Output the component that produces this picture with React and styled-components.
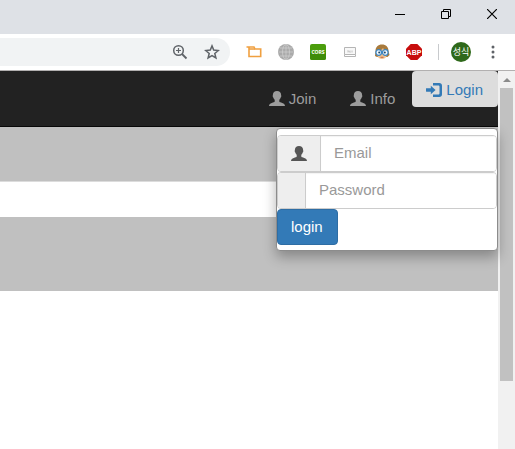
import React from "react";
import styled, { createGlobalStyle } from "styled-components";

const GlobalStyle = createGlobalStyle`
  * { box-sizing: border-box; }
  html, body, #root { height: 100%; }
  body {
    margin: 0;
    background: #fff;
    font: 15px/22px "Liberation Sans", Arial, sans-serif;
    color: #333;
  }
  button, input { font: inherit; }
  svg { display: block; flex: none; }
`;

const Window = styled.div`
  display: flex;
  flex-direction: column;
  min-height: 100%;
`;

const TitleBar = styled.header`
  display: flex;
  justify-content: flex-end;
  height: 34px;
  background: #dee1e6;
`;

const CaptionButton = styled.button`
  display: flex;
  justify-content: center;
  width: 46px;
  padding: 9px 0 0;
  border: 0;
  background: none;
`;

const Toolbar = styled.div`
  display: flex;
  align-items: center;
  gap: 16px;
  height: 37px;
  padding-right: 14px;
  background: #fff;
  border-bottom: 1px solid #b2b0b0;
`;

const AddressBar = styled.div`
  flex: 1;
  display: flex;
  align-items: center;
  justify-content: flex-end;
  gap: 16px;
  height: 28px;
  padding-right: 10px;
  border-radius: 0 14px 14px 0;
  background: #f1f3f4;
`;

const IconButton = styled.button`
  display: flex;
  align-items: center;
  justify-content: center;
  width: 16px;
  height: 16px;
  padding: 0;
  border: 0;
  border-radius: ${(p) => p.$radius || "0"};
  background: ${(p) => p.$fill || "none"};
  color: #fff;
`;

const Profile = styled.div`
  display: flex;
  align-items: center;
  gap: 12px;
`;

const Divider = styled.span`
  width: 1px;
  height: 16px;
  background: #c8cacd;
`;

const Avatar = styled.button`
  width: 20px;
  height: 20px;
  padding: 0;
  margin-right: 2px;
  border: 0;
  border-radius: 50%;
  background: #2f691b;
  color: #fff;
  font: 9px/20px "Noto Sans CJK KR", sans-serif;
`;

const MenuButton = styled(IconButton)`
  width: 12px;
`;

const Viewport = styled.div`
  flex: 1;
  display: flex;
`;

const Page = styled.main`
  flex: 1;
  min-width: 0;
`;

const NavBar = styled.nav`
  display: flex;
  align-items: stretch;
  justify-content: flex-end;
  height: 56px;
  background: #222;
  border-bottom: 1px solid #080808;
`;

const NavLink = styled.a`
  display: flex;
  align-items: center;
  gap: 4px;
  padding: 0 17px;
  color: #9d9d9d;
  text-decoration: none;
`;

const LoginItem = styled.div`
  position: relative;
  display: flex;
  align-items: flex-start;
`;

const LoginToggle = styled.button`
  display: flex;
  align-items: center;
  gap: 4px;
  height: 36px;
  padding: 2px 15px 0 14px;
  border: 0;
  border-radius: 4px;
  background: #ddd;
  color: #337ab7;
`;

const LoginMenu = styled.form`
  position: absolute;
  z-index: 1;
  top: 100%;
  right: 0;
  width: 222px;
  margin-top: 2px;
  padding: 6px 0 5px;
  background: #fff;
  border: 1px solid #8c8c8c;
  border-radius: 4px;
  box-shadow: 0 6px 13px rgba(0, 0, 0, 0.3);
`;

const InputGroup = styled.label`
  display: flex;
  height: 37px;
  border: 1px solid #ccc;
  border-radius: 4px;
  overflow: hidden;
`;

const Addon = styled.span`
  display: flex;
  align-items: center;
  padding: 0 13px;
  min-width: 28px;
  background: #eee;
  border-right: 1px solid #ccc;
  color: #555;
`;

const Field = styled.input`
  flex: 1;
  min-width: 0;
  padding: 0 13px 2px;
  border: 0;
  outline: 0;
  background: #fff;
  box-shadow: inset 0 1px 1px rgba(0, 0, 0, 0.05);
  color: #555;
  &::placeholder { color: #999; opacity: 1; }
`;

const SubmitButton = styled.button`
  display: block;
  height: 36px;
  padding: 0 14px 0 13px;
  border: 1px solid #2e6da4;
  border-radius: 4px;
  background: #337ab7;
  color: #fff;
`;

const Band = styled.section`
  height: ${(p) => p.$height};
  background: #c0c0c0;
`;

const Strip = styled.section`
  height: 36px;
  background: #fff;
  border-top: 1px solid #dcdcdc;
`;

const ScrollTrack = styled.div`
  display: flex;
  flex-direction: column;
  align-items: center;
  width: 17px;
  background: #f1f1f1;
  &::after { content: ""; flex: 3; }
`;

const ScrollArrow = styled.button`
  display: flex;
  align-items: center;
  justify-content: center;
  width: 17px;
  height: 17px;
  padding: 0;
  border: 0;
  background: none;
`;

const ScrollThumb = styled.div`
  flex: 13;
  width: 13px;
  background: #c1c1c1;
`;

function UserIcon() {
  return (
    <svg width="16" height="15" viewBox="0 0 16 15" fill="currentColor" aria-hidden="true">
      <path d="M8 0C5.500 0 3.900 1.500 3.900 3.700c0 .7-.3.9-.2 1.500.1.8.6 1 .8 1.700.2.800.700 1.200 1.200 1.800v1.500c0 .6-.5.800-1.200 1.100l-2.900 1.100C.6 12.900.1 13.600 0 15h16c-.1-1.400-.6-2.100-1.600-2.600l-2.900-1.100c-.7-.3-1.200-.5-1.200-1.100V8.700c.5-.6 1-1 1.200-1.800.2-.7.700-.9.800-1.700.1-.6-.2-.8-.2-1.500C12.100 1.500 10.500 0 8 0z" />
    </svg>
  );
}

function LoginIcon() {
  return (
    <svg width="16" height="15" viewBox="0 0 16 15" fill="currentColor" aria-hidden="true">
      <path d="M7 0h6.200C15 0 16 1 16 2.700v8.600c0 1.700-1 2.700-2.800 2.700H7v-2.500h5.200c.9 0 1.300-.3 1.300-1.200V3.700c0-.9-.4-1.200-1.300-1.200H7z" />
      <path d="M4.800 2.700 9.600 7l-4.800 4.300V8.700H.4c-.3 0-.4-.1-.4-.4V5.700c0-.3.1-.4.4-.4h4.400z" />
    </svg>
  );
}

function BrowserToolbar() {
  return (
    <Toolbar>
      <AddressBar>
        <IconButton aria-label="Zoom">
          <svg width="16" height="16" viewBox="0 0 16 16" fill="none" stroke="#5f6368">
            <circle cx="6.500" cy="6.500" r="4.800" strokeWidth="1.500" />
            <path d="m10 10 4.500 4.500" strokeWidth="1.800" />
            <path d="M4 6.500h5M6.500 4v5" strokeWidth="1.200" />
          </svg>
        </IconButton>
        <IconButton aria-label="Bookmark">
          <svg width="16" height="16" viewBox="0 0 16 16" fill="none" stroke="#5f6368" strokeWidth="1.500">
            <path d="m8 1.900 1.700 4.200 4.600.4-3.500 3 1.100 4.500L8 11.600 4.100 14l1.100-4.500-3.500-3 4.600-.4z" />
          </svg>
        </IconButton>
      </AddressBar>
      <IconButton aria-label="Folder extension">
        <svg width="16" height="16" viewBox="0 0 16 16" fill="none" stroke="#f0a040" strokeWidth="1.600">
          <path d="M.5 3h7.500l1 2h5.700v7.500H3V3.500" />
          <path d="M3 5h6" />
        </svg>
      </IconButton>
      <IconButton aria-label="Web extension">
        <svg width="16" height="16" viewBox="0 0 16 16" fill="none" stroke="#d1d1d1" strokeWidth=".7">
          <circle cx="8" cy="8" r="8" fill="#aaa" stroke="none" />
          <ellipse cx="8" cy="8" rx="3.500" ry="7.500" />
          <path d="M8 .5v15M.5 8h15M2 4h12M2 12h12" />
        </svg>
      </IconButton>
      <IconButton aria-label="CORS extension" $fill="#4b9d0c" $radius="2px">
        <svg width="16" height="16" viewBox="0 0 16 16">
          <path d="M0 9h16v5a2 2 0 0 1-2 2H2a2 2 0 0 1-2-2z" fill="#3e8c08" />
          <text x="8" y="10" textAnchor="middle" fill="#fff" fontFamily="Open Sans, sans-serif" fontSize="5" fontWeight="700">CORS</text>
        </svg>
      </IconButton>
      <IconButton aria-label="Screen extension">
        <svg width="16" height="16" viewBox="0 0 16 16" fill="none" stroke="#b5b5b5">
          <path d="M2.500 3.500h11v7h-11z" fill="#f8f8f8" />
          <path d="M2.500 10.500v2h11v-2" />
          <path d="M6 8.500v-2l2 2v-2M10 6.500v2" strokeWidth=".8" />
        </svg>
      </IconButton>
      <IconButton aria-label="Reader extension">
        <svg width="16" height="16" viewBox="0 0 16 16">
          <path d="M1.500 7C1.500 3 4 .5 8 .5S14.500 3 14.500 7l1 4-2 2H3l-2-1z" fill="#a87a3c" />
          <path d="M3 7c3 0 5-1 6-3 1 2 2 3 4 3v4c-1 3-3 4-5 4s-4-1-5-4z" fill="#efc18f" />
          <circle cx="4.700" cy="8.500" r="2.800" fill="#eff8ff" stroke="#3a86c4" strokeWidth="1.200" />
          <circle cx="11.300" cy="8.500" r="2.800" fill="#eff8ff" stroke="#3a86c4" strokeWidth="1.200" />
          <circle cx="5.200" cy="8.500" r="1" fill="#234660" />
          <circle cx="10.800" cy="8.500" r="1" fill="#234660" />
          <path d="M6.500 13.300h3" stroke="#c46745" />
        </svg>
      </IconButton>
      <IconButton aria-label="ABP extension">
        <svg width="16" height="16" viewBox="0 0 16 16">
          <path d="M4.700 0h6.600L16 4.700v6.600L11.300 16H4.700L0 11.300V4.700z" fill="#c70d0c" />
          <text x="8" y="10.500" textAnchor="middle" fill="#fff" fontFamily="Liberation Sans, sans-serif" fontSize="7" fontWeight="700">ABP</text>
        </svg>
      </IconButton>
      <Profile>
        <Divider />
        <Avatar aria-label="성식">성식</Avatar>
      </Profile>
      <MenuButton aria-label="Menu">
        <svg width="12" height="16" viewBox="0 0 12 16" fill="#5f6368">
          <circle cx="4" cy="3" r="1.500" />
          <circle cx="4" cy="8" r="1.500" />
          <circle cx="4" cy="13" r="1.500" />
        </svg>
      </MenuButton>
    </Toolbar>
  );
}

export default function App() {
  return (
    <Window>
      <GlobalStyle />
      <TitleBar>
        <CaptionButton aria-label="Minimize">
          <svg width="10" height="10" viewBox="0 0 10 10" stroke="#000"><path d="M0 5.500h10" /></svg>
        </CaptionButton>
        <CaptionButton aria-label="Restore">
          <svg width="10" height="10" viewBox="0 0 10 10" fill="none" stroke="#000">
            <path d="M.5 2.500h7v7h-7zM2.500 2.500v-2h7v7h-2" />
          </svg>
        </CaptionButton>
        <CaptionButton aria-label="Close">
          <svg width="10" height="10" viewBox="0 0 10 10" stroke="#000" strokeWidth="1.200"><path d="m0 0 10 10M10 0 0 10" /></svg>
        </CaptionButton>
      </TitleBar>
      <BrowserToolbar />
      <Viewport>
        <Page>
          <NavBar>
            <NavLink href="#join"><UserIcon />Join</NavLink>
            <NavLink href="#info"><UserIcon />Info</NavLink>
            <LoginItem>
              <LoginToggle type="button" aria-expanded="true"><LoginIcon />Login</LoginToggle>
              <LoginMenu onSubmit={(e) => e.preventDefault()}>
                <InputGroup>
                  <Addon><UserIcon /></Addon>
                  <Field type="email" placeholder="Email" aria-label="Email" />
                </InputGroup>
                <InputGroup>
                  <Addon />
                  <Field type="password" placeholder="Password" aria-label="Password" />
                </InputGroup>
                <SubmitButton type="submit">login</SubmitButton>
              </LoginMenu>
            </LoginItem>
          </NavBar>
          <Band $height="54px" />
          <Strip />
          <Band $height="74px" />
        </Page>
        <ScrollTrack>
          <ScrollArrow aria-label="Scroll up">
            <svg width="8" height="4" viewBox="0 0 8 4" fill="#8b8b8b"><path d="M0 4 4 0l4 4z" /></svg>
          </ScrollArrow>
          <ScrollThumb />
        </ScrollTrack>
      </Viewport>
    </Window>
  );
}
